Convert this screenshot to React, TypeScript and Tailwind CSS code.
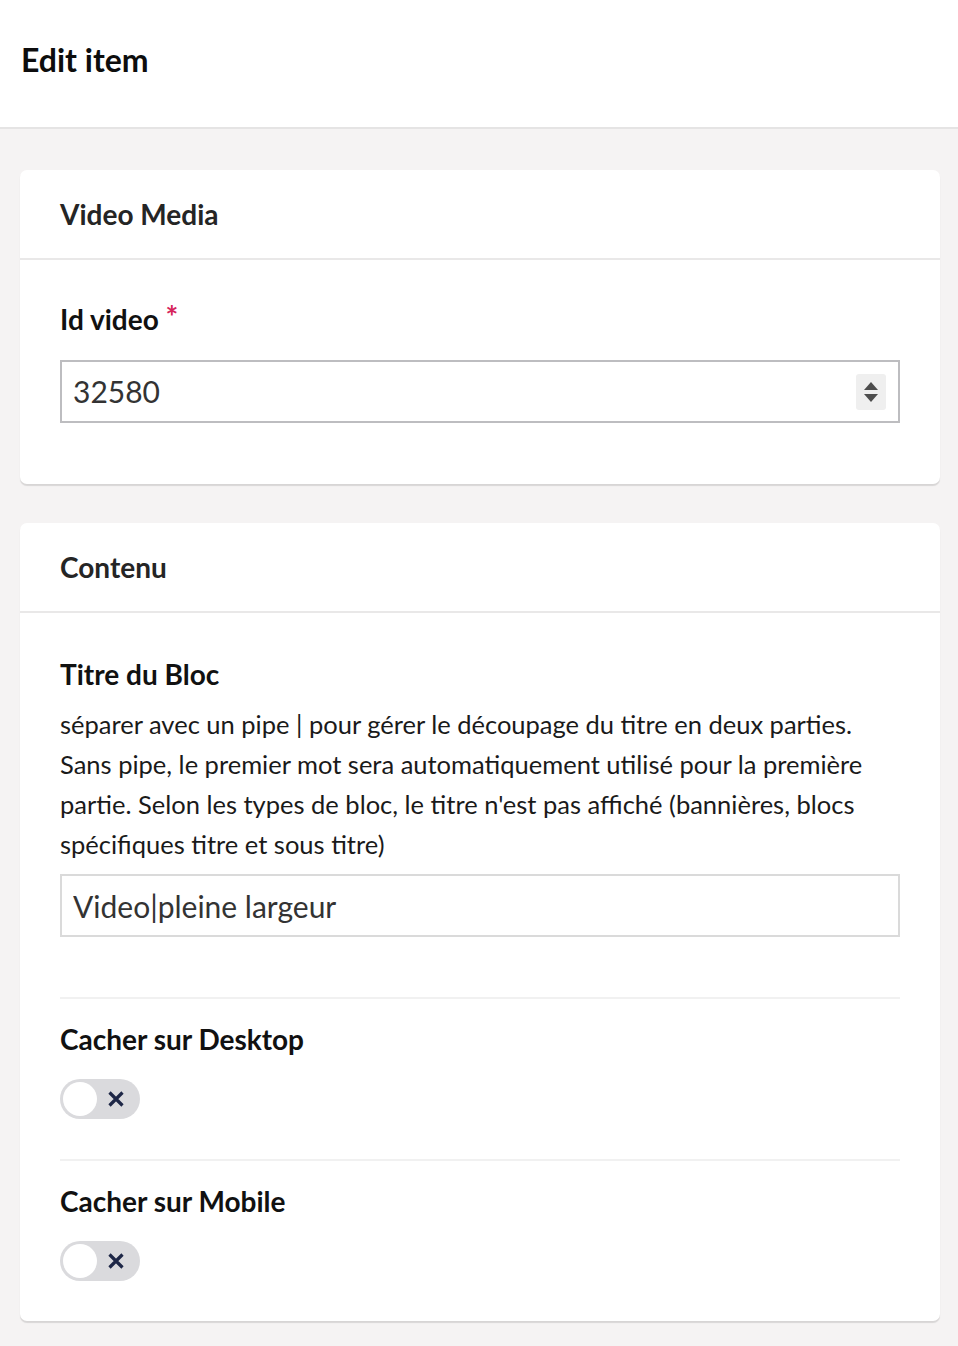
import { useState } from "react";

const Toggle = ({ on, onChange }: { on: boolean; onChange: () => void }) => (
  <button
    onClick={onChange}
    className={`relative flex h-[40px] w-[80px] items-center rounded-full ${on ? "bg-[#2e7d5b]" : "bg-[#dadadd]"}`}
  >
    <span
      className={`absolute top-[3px] h-[34px] w-[34px] rounded-full bg-white ${on ? "left-[43px]" : "left-[3px]"}`}
    />
    {!on && (
      <svg className="absolute left-[48px] top-[12px]" width="16" height="16" viewBox="0 0 16 16">
        <path d="M1.5 1.5 L14.5 14.5 M14.5 1.5 L1.5 14.5" stroke="#1e2747" strokeWidth="3.2" />
      </svg>
    )}
  </button>
);

const Card = ({ title, children }: { title: string; children: React.ReactNode }) => (
  <div className="rounded-[7px] bg-white shadow-[0_2px_1px_rgba(0,0,0,0.12)]">
    {/* HEADER */}
    <div className="flex h-[90px] items-center border-b-2 border-[#e9e8e8] px-10">
      <h2 className="text-[28px] font-bold text-[#252525]">{title}</h2>
    </div>
    {children}
  </div>
);

export default function App() {
  const [idVideo, setIdVideo] = useState("32580");
  const [titre, setTitre] = useState("Video|pleine largeur");
  const [hideDesktop, setHideDesktop] = useState(false);
  const [hideMobile, setHideMobile] = useState(false);

  return (
    <div className="min-h-[1346px] bg-[#f5f3f3] font-['Lato','Liberation_Sans',sans-serif] text-[#111]">
      {/* TOP */}
      <div className="flex h-[129px] items-center border-b-2 border-[#e5e4e4] bg-white px-[21px] pb-[8px]">
        <h1 className="text-[32px] font-bold text-[#0d0d0d]">Edit item</h1>
      </div>

      <div className="flex flex-col gap-[39px] pl-5 pr-[18px] pt-[41px]">
        {/* VIDEO MEDIA */}
        <Card title="Video Media">
          <div className="px-10 pt-[39px] pb-[61px]">
            <label className="block text-[28px] font-bold leading-[40px]">
              Id video{" "}
              <span className="relative top-[-2px] text-[30px] font-bold leading-none text-[#d6245b]">*</span>
            </label>
            <div className="mt-[21px] flex h-[63px] items-center border-2 border-[#bdbdc0] pl-[11px] pr-[12px]">
              <input
                value={idVideo}
                onChange={(e) => setIdVideo(e.target.value)}
                className="min-w-0 flex-1 bg-transparent text-[30px] text-[#333] outline-none"
              />
              <div className="flex h-[36px] w-[30px] flex-col items-center justify-center gap-[4px] rounded-[3px] bg-[#efefef]">
                <svg width="14" height="8" viewBox="0 0 14 8"><path d="M0 8 L7 0 L14 8 Z" fill="#4d4d4d" /></svg>
                <svg width="14" height="8" viewBox="0 0 14 8"><path d="M0 0 L7 8 L14 0 Z" fill="#4d4d4d" /></svg>
              </div>
            </div>
          </div>
        </Card>

        {/* CONTENU */}
        <Card title="Contenu">
          <div className="px-10 pt-[41px] pb-[40px]">
            <label className="block text-[28px] font-bold leading-[40px]">Titre du Bloc</label>
            <p className="mt-[10px] text-[25.5px] leading-[40px] text-[#1a1a1a]">
              séparer avec un pipe | pour gérer le découpage du titre en deux parties. Sans pipe, le premier mot sera
              automatiquement utilisé pour la première partie. Selon les types de bloc, le titre n'est pas affiché
              (bannières, blocs spécifiques titre et sous titre)
            </p>
            <input
              value={titre}
              onChange={(e) => setTitre(e.target.value)}
              className="mt-[10px] block h-[63px] w-full border-2 border-[#dadada] px-[11px] text-[30px] text-[#333] outline-none"
            />

            <div className="mt-[60px] border-t-2 border-[#f1f1f1] pt-[20px]">
              <label className="block text-[28px] font-bold leading-[40px]">Cacher sur Desktop</label>
              <div className="mt-[20px]">
                <Toggle on={hideDesktop} onChange={() => setHideDesktop(!hideDesktop)} />
              </div>
            </div>

            <div className="mt-[40px] border-t-2 border-[#f1f1f1] pt-[20px]">
              <label className="block text-[28px] font-bold leading-[40px]">Cacher sur Mobile</label>
              <div className="mt-[20px]">
                <Toggle on={hideMobile} onChange={() => setHideMobile(!hideMobile)} />
              </div>
            </div>
          </div>
        </Card>
      </div>
    </div>
  );
}
